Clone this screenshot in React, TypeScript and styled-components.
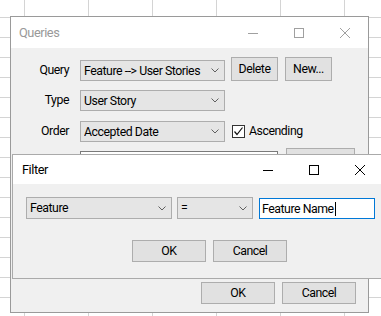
import styled, { createGlobalStyle } from 'styled-components';

const GlobalStyle = createGlobalStyle`
   html, body {
      margin: 0;
      padding: 0;
      background: #fff;
   }
   * {
      box-sizing: border-box;
   }
`;

const Desktop = styled.div`
   position: relative;
   width: 381px;
   height: 316px;
   overflow: hidden;
   font-family: Roboto, 'Liberation Sans', sans-serif;
   font-size: 12.3px;
   letter-spacing: -0.45px;
   color: #000;
   background-color: #fff;
   background-image: linear-gradient(to right, #d4d4d4 1px, transparent 1px),
      linear-gradient(to bottom, #d4d4d4 1px, transparent 1px);
   background-size: 64px 20px;
   background-position: 24px 17px;
`;

const Window = styled.div<{
   $left: number;
   $top: number;
   $width: number;
   $height: number;
   $border: string;
}>`
   position: absolute;
   left: ${({ $left }) => $left}px;
   top: ${({ $top }) => $top}px;
   width: ${({ $width }) => $width}px;
   height: ${({ $height }) => $height}px;
   border: 1px solid ${({ $border }) => $border};
   display: flex;
   flex-direction: column;
   background: #f0f0f0;
`;

const TitleBar = styled.div<{ $height: number }>`
   height: ${({ $height }) => $height}px;
   flex-shrink: 0;
   background: #fff;
   display: flex;
   align-items: center;
`;

const Title = styled.span<{ $active?: boolean }>`
   flex: 1;
   padding-left: ${({ $active }) => ($active ? 9 : 8)}px;
   color: ${({ $active }) => ($active ? '#000' : '#999')};
   font-size: 12.8px;
`;

const CaptionButton = styled.div<{ $color: string }>`
   width: 46px;
   height: 100%;
   display: flex;
   align-items: center;
   justify-content: center;
   color: ${({ $color }) => $color};
`;

const Body = styled.div<{ $padding: string }>`
   flex: 1;
   display: flex;
   flex-direction: column;
   padding: ${({ $padding }) => $padding};
`;

const Row = styled.div<{ $mt?: number; $h?: number }>`
   display: flex;
   align-items: flex-end;
   margin-top: ${({ $mt }) => $mt ?? 0}px;
   height: ${({ $h }) => ($h ? `${$h}px` : 'auto')};
`;

const Label = styled.span`
   width: 58px;
   height: 21px;
   line-height: 21px;
   margin-right: 11px;
   text-align: right;
`;

const Combo = styled.div<{ $width: number; $height?: number; $ml?: number }>`
   width: ${({ $width }) => $width}px;
   height: ${({ $height }) => $height ?? 21}px;
   margin-left: ${({ $ml }) => $ml ?? 0}px;
   border: 1px solid #adadad;
   background: #e5e5e5;
   display: flex;
   align-items: center;
   padding: 0 5px 0 3px;
   flex-shrink: 0;
`;

const ComboText = styled.span`
   flex: 1;
   white-space: nowrap;
   overflow: hidden;
`;

const Button = styled.div<{ $width: number; $height: number; $ml?: number }>`
   width: ${({ $width }) => $width}px;
   height: ${({ $height }) => $height}px;
   margin-left: ${({ $ml }) => $ml ?? 0}px;
   border: 1px solid #adadad;
   background: #e1e1e1;
   display: flex;
   align-items: center;
   justify-content: center;
   flex-shrink: 0;
`;

const CheckBox = styled.div`
   width: 13px;
   height: 13px;
   margin: 0 4px 4px 7px;
   border: 1px solid #333;
   background: #fff;
   display: flex;
   align-items: center;
   justify-content: center;
`;

const CheckLabel = styled.span`
   height: 21px;
   line-height: 21px;
`;

const TextBox = styled.div<{ $width: number; $ml?: number; $focused?: boolean }>`
   width: ${({ $width }) => $width}px;
   height: 21px;
   margin-left: ${({ $ml }) => $ml ?? 0}px;
   border: 1px solid ${({ $focused }) => ($focused ? '#0078d7' : '#7a7a7a')};
   background: #fff;
   display: flex;
   align-items: center;
   padding-left: 2px;
   flex-shrink: 0;
`;

const Caret = styled.span`
   display: inline-block;
   width: 1px;
   height: 14px;
   margin-left: 1px;
   background: #000;
`;

const ButtonBar = styled.div<{ $justify: string; $mt?: number }>`
   display: flex;
   justify-content: ${({ $justify }) => $justify};
   gap: 7px;
   margin-top: ${({ $mt }) => ($mt !== undefined ? `${$mt}px` : 'auto')};
`;

const Chevron = () => (
   <svg width='8' height='5' viewBox='0 0 8 5'>
      <polyline points='0.5,0.5 4,4 7.5,0.5' fill='none' stroke='#606060' strokeWidth='1' />
   </svg>
);

const Caption = ({ color }: { color: string }) => (
   <>
      <CaptionButton $color={color}>
         <svg width='10' height='10' viewBox='0 0 10 10'>
            <line x1='0' y1='5.5' x2='10' y2='5.5' stroke='currentColor' />
         </svg>
      </CaptionButton>
      <CaptionButton $color={color}>
         <svg width='10' height='10' viewBox='0 0 10 10'>
            <rect x='0.5' y='0.5' width='9' height='9' fill='none' stroke='currentColor' />
         </svg>
      </CaptionButton>
      <CaptionButton $color={color}>
         <svg width='10' height='10' viewBox='0 0 10 10'>
            <path d='M0 0 L10 10 M10 0 L0 10' stroke='currentColor' />
         </svg>
      </CaptionButton>
   </>
);

const App = () => {
   return (
      <>
         <GlobalStyle />
         <Desktop>
            <Window $left={10} $top={16} $width={359} $height={297} $border='#9a9a9a'>
               <TitleBar $height={31}>
                  <Title>Queries</Title>
                  <Caption color='#a0a0a0' />
               </TitleBar>
               <Body $padding='9px 12px 8px 0'>
                  <Row $h={24}>
                     <Label>Query</Label>
                     <Combo $width={145}>
                        <ComboText>Feature --&gt; User Stories</ComboText>
                        <Chevron />
                     </Combo>
                     <Button $width={47} $height={24} $ml={6}>
                        Delete
                     </Button>
                     <Button $width={47} $height={24} $ml={7}>
                        New...
                     </Button>
                  </Row>
                  <Row $mt={9}>
                     <Label>Type</Label>
                     <Combo $width={145}>
                        <ComboText>User Story</ComboText>
                        <Chevron />
                     </Combo>
                  </Row>
                  <Row $mt={10}>
                     <Label>Order</Label>
                     <Combo $width={145}>
                        <ComboText>Accepted Date</ComboText>
                        <Chevron />
                     </Combo>
                     <CheckBox>
                        <svg width='11' height='11' viewBox='0 0 11 11'>
                           <polyline points='1.5,5.5 4,8.5 9.5,1.5' fill='none' stroke='#111' strokeWidth='1.2' />
                        </svg>
                     </CheckBox>
                     <CheckLabel>Ascending</CheckLabel>
                  </Row>
                  <Row $mt={6} $h={24}>
                     <Label />
                     <TextBox $width={198} />
                     <Button $width={69} $height={24} $ml={8} />
                  </Row>
                  <ButtonBar $justify='flex-end'>
                     <Button $width={74} $height={22}>
                        OK
                     </Button>
                     <Button $width={74} $height={22}>
                        Cancel
                     </Button>
                  </ButtonBar>
               </Body>
            </Window>

            <Window $left={12} $top={154} $width={372} $height={125} $border='#aaaaaa'>
               <TitleBar $height={29}>
                  <Title $active>Filter</Title>
                  <Caption color='#000' />
               </TitleBar>
               <Body $padding='13px 0 0 13px'>
                  <Row>
                     <Combo $width={146} $height={22}>
                        <ComboText>Feature</ComboText>
                        <Chevron />
                     </Combo>
                     <Combo $width={76} $height={22} $ml={5}>
                        <ComboText>=</ComboText>
                        <Chevron />
                     </Combo>
                     <TextBox $width={116} $ml={6} $focused>
                        Feature Name
                        <Caret />
                     </TextBox>
                  </Row>
                  <ButtonBar $justify='flex-start' $mt={21}>
                     <Button $width={74} $height={22} $ml={106}>
                        OK
                     </Button>
                     <Button $width={74} $height={22}>
                        Cancel
                     </Button>
                  </ButtonBar>
               </Body>
            </Window>
         </Desktop>
      </>
   );
};

export default App;
